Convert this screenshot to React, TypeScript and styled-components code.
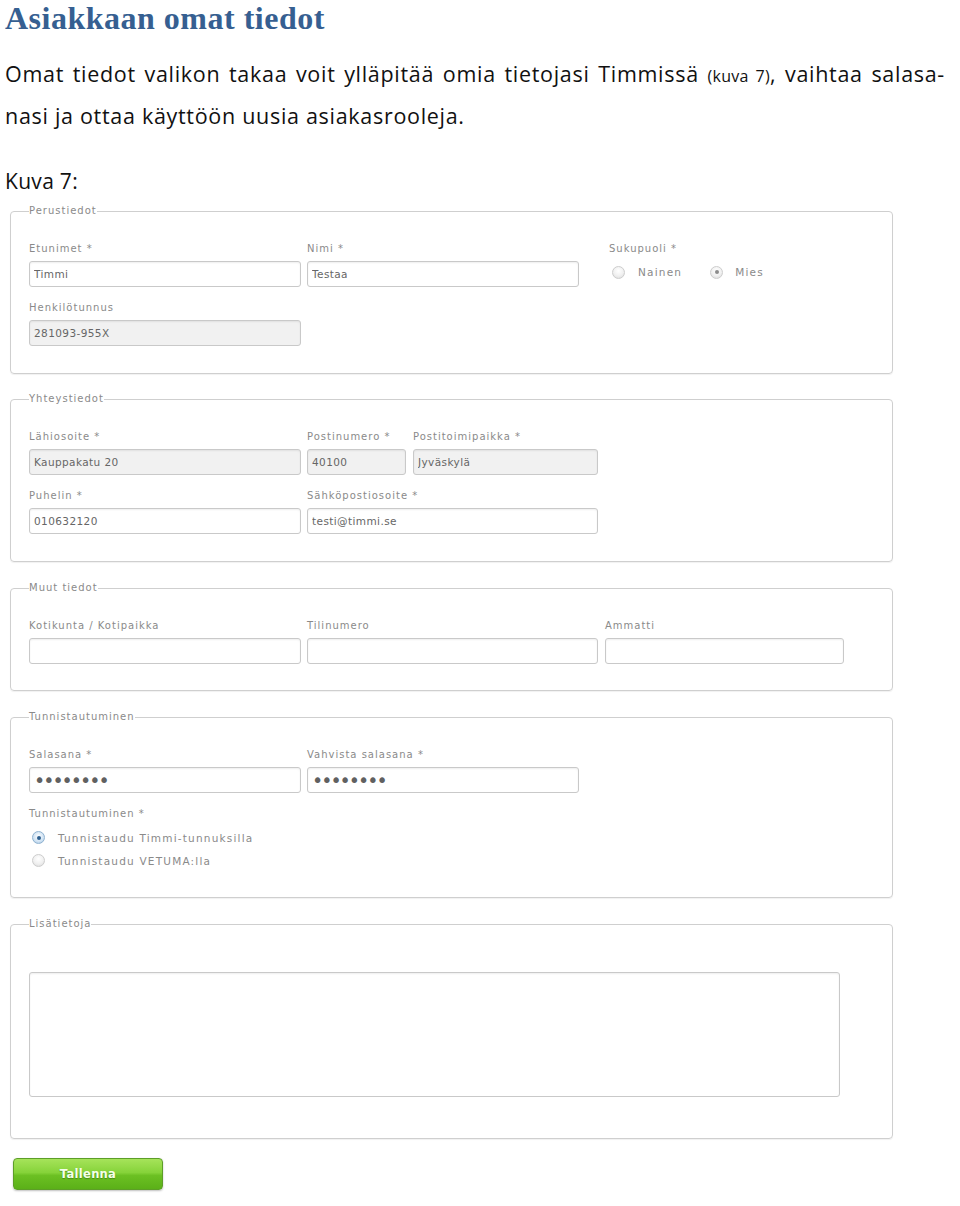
import React from "react";
import styled, { createGlobalStyle } from "styled-components";

const GlobalStyle = createGlobalStyle`
  html, body {
    margin: 0;
    padding: 0;
    background: #fff;
  }
`;

const Page = styled.div`
  width: 955px;
  padding: 0 0 20px 5px;
`;

const Title = styled.h1`
  margin: 0;
  font-family: "Liberation Serif", "DejaVu Serif", serif;
  font-size: 32px;
  line-height: 36px;
  letter-spacing: 0.5px;
  font-weight: bold;
  color: #365f91;
`;

const Intro = styled.div`
  margin-top: 18px;
  font-family: "Open Sans", Lato, sans-serif;
  font-size: 21.5px;
  line-height: 39px;
  letter-spacing: 0.7px;
  color: #111;
`;

const JustifiedLine = styled.div`
  width: 940px;
  text-align: justify;
  text-align-last: justify;
`;

const Small = styled.span`
  font-size: 16px;
  letter-spacing: 0.3px;
`;

const Caption = styled.div`
  margin-top: 27px;
  font-family: "Open Sans", Lato, sans-serif;
  font-size: 21px;
  line-height: 39px;
  letter-spacing: 0.3px;
  color: #111;
`;

const Form = styled.form`
  margin: 3px 0 0 5px;
`;

const Box = styled.fieldset<{ $top: number; $bottom: number }>`
  box-sizing: border-box;
  width: 883px;
  min-inline-size: 0;
  margin: 0 0 19px 0;
  padding: ${(p) => p.$top}px 18px ${(p) => p.$bottom}px 18px;
  border: 1px solid #cfcfcf;
  border-radius: 4px;
  box-shadow: 0 1px 1px rgba(0, 0, 0, 0.06);

  &:first-of-type {
    margin-bottom: 18px;
  }
`;

const Legend = styled.legend`
  padding: 0;
  font-family: "DejaVu Sans", sans-serif;
  font-size: 10px;
  line-height: 14px;
  letter-spacing: 1px;
  color: #8a8a8a;
`;

const Row = styled.div<{ $mt?: number }>`
  display: flex;
  align-items: flex-start;
  gap: 6px;
  margin-top: ${(p) => p.$mt ?? 0}px;
`;

const Field = styled.div<{ $w: number; $ml?: number }>`
  display: flex;
  flex-direction: column;
  width: ${(p) => p.$w}px;
  margin-left: ${(p) => p.$ml ?? 0}px;
`;

const Label = styled.label`
  display: block;
  margin-bottom: 5px;
  font-family: "DejaVu Sans", sans-serif;
  font-size: 10px;
  line-height: 14px;
  letter-spacing: 1px;
  color: #8a8a8a;
  white-space: nowrap;
`;

const Input = styled.input<{ $grey?: boolean; $dots?: boolean }>`
  box-sizing: border-box;
  width: 100%;
  height: 26px;
  margin: 0;
  padding: 0 4px;
  border: 1px solid #c9c9c9;
  border-radius: 3px;
  background: ${(p) => (p.$grey ? "#f1f1f1" : "#fff")};
  box-shadow: inset 0 1px 2px rgba(0, 0, 0, 0.07);
  font-family: "DejaVu Sans", sans-serif;
  font-size: ${(p) => (p.$dots ? "19px" : "10.5px")};
  letter-spacing: ${(p) => (p.$dots ? "-2px" : "0.4px")};
  color: ${(p) => (p.$dots ? "#606060" : "#666")};
  outline: none;
`;

const TextArea = styled.textarea`
  display: block;
  box-sizing: border-box;
  width: 811px;
  height: 125px;
  margin: 0;
  padding: 4px;
  border: 1px solid #c9c9c9;
  border-radius: 3px;
  box-shadow: inset 0 1px 2px rgba(0, 0, 0, 0.07);
  resize: none;
  outline: none;
`;

const OptionRow = styled.div<{ $h: number }>`
  display: flex;
  align-items: center;
  height: ${(p) => p.$h}px;
`;

const Radio = styled.span<{ $checked?: boolean; $blue?: boolean }>`
  position: relative;
  box-sizing: border-box;
  width: 13px;
  height: 13px;
  margin-left: 3px;
  border-radius: 50%;
  border: 1px solid ${(p) => (p.$blue ? "#8fb2d0" : "#cdcdcd")};
  background: ${(p) =>
    p.$blue
      ? "radial-gradient(circle at 50% 40%, #ffffff 0%, #cfe2f3 60%, #9fc0de 100%)"
      : "radial-gradient(circle at 50% 35%, #ffffff 0%, #f0f0f0 55%, #d8d8d8 100%)"};
  flex: none;

  &::after {
    content: "";
    display: ${(p) => (p.$checked ? "block" : "none")};
    position: absolute;
    left: 50%;
    top: 50%;
    width: 4px;
    height: 4px;
    margin: -2px 0 0 -2px;
    border-radius: 50%;
    background: ${(p) => (p.$blue ? "#2d5f8f" : "#8c8c8c")};
  }
`;

const OptionText = styled.span<{ $gap: number; $after?: number }>`
  margin-left: ${(p) => p.$gap}px;
  margin-right: ${(p) => p.$after ?? 0}px;
  font-family: "DejaVu Sans", sans-serif;
  font-size: 10.5px;
  letter-spacing: 1.2px;
  color: #8a8a8a;
  white-space: nowrap;
`;

const SaveButton = styled.button`
  display: block;
  width: 150px;
  height: 32px;
  margin: 1px 0 0 3px;
  padding: 0;
  border: 1px solid #5d9e28;
  border-radius: 4px;
  background: linear-gradient(#a6e35a 0%, #86d33a 45%, #6cc023 55%, #5bb018 100%);
  box-shadow: 0 1px 2px rgba(0, 0, 0, 0.25);
  font-family: "DejaVu Sans", sans-serif;
  font-size: 11.5px;
  font-weight: bold;
  letter-spacing: 0.3px;
  color: #f4ffe8;
  text-shadow: 0 1px 1px rgba(40, 90, 10, 0.5);
  cursor: pointer;
`;

export default function App() {
  return (
    <Page>
      <GlobalStyle />
      <Title>Asiakkaan omat tiedot</Title>
      <Intro>
        <JustifiedLine>
          Omat tiedot valikon takaa voit ylläpitää omia tietojasi Timmissä{" "}
          <Small>(kuva 7)</Small>, vaihtaa salasa-
        </JustifiedLine>
        <div>nasi ja ottaa käyttöön uusia asiakasrooleja.</div>
      </Intro>
      <Caption>Kuva 7:</Caption>

      <Form onSubmit={(e) => e.preventDefault()}>
        <Box $top={24} $bottom={27}>
          <Legend>Perustiedot</Legend>
          <Row>
            <Field $w={272}>
              <Label>Etunimet *</Label>
              <Input readOnly defaultValue="Timmi" />
            </Field>
            <Field $w={272}>
              <Label>Nimi *</Label>
              <Input readOnly defaultValue="Testaa" />
            </Field>
            <Field $w={200} $ml={24}>
              <Label>Sukupuoli *</Label>
              <OptionRow $h={22}>
                <Radio />
                <OptionText $gap={13} $after={25}>Nainen</OptionText>
                <Radio $checked />
                <OptionText $gap={12}>Mies</OptionText>
              </OptionRow>
            </Field>
          </Row>
          <Row $mt={14}>
            <Field $w={272}>
              <Label>Henkilötunnus</Label>
              <Input readOnly $grey defaultValue="281093-955X" />
            </Field>
          </Row>
        </Box>

        <Box $top={24} $bottom={27}>
          <Legend>Yhteystiedot</Legend>
          <Row>
            <Field $w={272}>
              <Label>Lähiosoite *</Label>
              <Input readOnly $grey defaultValue="Kauppakatu 20" />
            </Field>
            <Field $w={99}>
              <Label>Postinumero *</Label>
              <Input readOnly $grey defaultValue="40100" />
            </Field>
            <Field $w={185} $ml={1}>
              <Label>Postitoimipaikka *</Label>
              <Input readOnly $grey defaultValue="Jyväskylä" />
            </Field>
          </Row>
          <Row $mt={14}>
            <Field $w={272}>
              <Label>Puhelin *</Label>
              <Input readOnly defaultValue="010632120" />
            </Field>
            <Field $w={291}>
              <Label>Sähköpostiosoite *</Label>
              <Input readOnly defaultValue="testi@timmi.se" />
            </Field>
          </Row>
        </Box>

        <Box $top={24} $bottom={26}>
          <Legend>Muut tiedot</Legend>
          <Row>
            <Field $w={272}>
              <Label>Kotikunta / Kotipaikka</Label>
              <Input readOnly />
            </Field>
            <Field $w={291}>
              <Label>Tilinumero</Label>
              <Input readOnly />
            </Field>
            <Field $w={239} $ml={1}>
              <Label>Ammatti</Label>
              <Input readOnly />
            </Field>
          </Row>
        </Box>

        <Box $top={24} $bottom={25}>
          <Legend>Tunnistautuminen</Legend>
          <Row>
            <Field $w={272}>
              <Label>Salasana *</Label>
              <Input readOnly type="password" $dots defaultValue="salasana" />
            </Field>
            <Field $w={272}>
              <Label>Vahvista salasana *</Label>
              <Input readOnly type="password" $dots defaultValue="salasana" />
            </Field>
          </Row>
          <Row $mt={14}>
            <Field $w={400}>
              <Label>Tunnistautuminen *</Label>
              <OptionRow $h={23}>
                <Radio $checked $blue />
                <OptionText $gap={13}>Tunnistaudu Timmi-tunnuksilla</OptionText>
              </OptionRow>
              <OptionRow $h={23}>
                <Radio />
                <OptionText $gap={13}>Tunnistaudu VETUMA:lla</OptionText>
              </OptionRow>
            </Field>
          </Row>
        </Box>

        <Box $top={41} $bottom={41}>
          <Legend>Lisätietoja</Legend>
          <TextArea readOnly />
        </Box>

        <SaveButton type="submit">Tallenna</SaveButton>
      </Form>
    </Page>
  );
}
